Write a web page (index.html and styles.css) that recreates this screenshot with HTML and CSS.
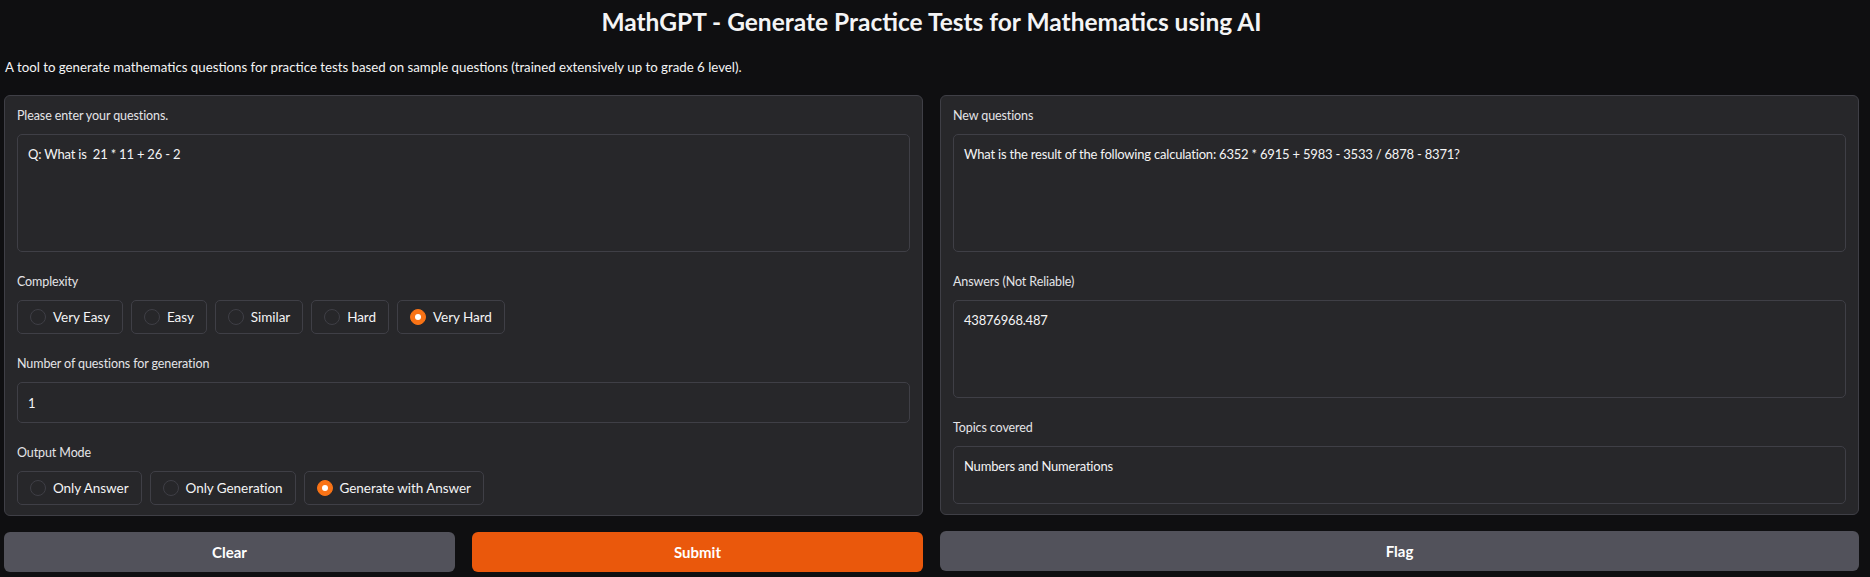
FILE: index.html
```html
<!DOCTYPE html>
<html lang="en">
<head>
<meta charset="utf-8">
<title>MathGPT</title>
<link rel="stylesheet" href="styles.css">
</head>
<body>
<div class="app">
  <h1 class="title">MathGPT - Generate Practice Tests for Mathematics using AI</h1>
  <p class="desc">A tool to generate mathematics questions for practice tests based on sample questions (trained extensively up to grade 6 level).</p>
  <div class="main">
    <div class="col">
      <div class="panel">
        <div class="field">
          <div class="label">Please enter your questions.</div>
          <textarea class="box rows5" readonly>Q: What is  21 * 11 + 26 - 2</textarea>
        </div>
        <div class="field">
          <div class="label">Complexity</div>
          <div class="radios">
            <label class="radio"><span class="dot"></span><span>Very Easy</span></label>
            <label class="radio"><span class="dot"></span><span>Easy</span></label>
            <label class="radio"><span class="dot"></span><span>Similar</span></label>
            <label class="radio"><span class="dot"></span><span>Hard</span></label>
            <label class="radio"><span class="dot on"></span><span>Very Hard</span></label>
          </div>
        </div>
        <div class="field">
          <div class="label">Number of questions for generation</div>
          <div class="box number">1</div>
        </div>
        <div class="field">
          <div class="label">Output Mode</div>
          <div class="radios">
            <label class="radio"><span class="dot"></span><span>Only Answer</span></label>
            <label class="radio"><span class="dot"></span><span>Only Generation</span></label>
            <label class="radio"><span class="dot on"></span><span>Generate with Answer</span></label>
          </div>
        </div>
      </div>
      <div class="btn-row">
        <button class="btn secondary">Clear</button>
        <button class="btn primary">Submit</button>
      </div>
    </div>
    <div class="col">
      <div class="panel">
        <div class="field">
          <div class="label">New questions</div>
          <textarea class="box rows5" readonly>What is the result of the following calculation: 6352 * 6915 + 5983 - 3533 / 6878 - 8371?</textarea>
        </div>
        <div class="field">
          <div class="label">Answers (Not Reliable)</div>
          <textarea class="box rows4" readonly>43876968.487</textarea>
        </div>
        <div class="field">
          <div class="label">Topics covered</div>
          <textarea class="box rows2" readonly>Numbers and Numerations</textarea>
        </div>
      </div>
      <div class="btn-row single">
        <button class="btn secondary">Flag</button>
      </div>
    </div>
  </div>
</div>
</body>
</html>
```
FILE: styles.css
```css
* { box-sizing: border-box; }

html, body {
  margin: 0;
  padding: 0;
  background: #0f0f11;
}

body {
  font-family: "Source Sans Pro", Lato, "Noto Sans", sans-serif;
  color: #f4f4f5;
}

.app {
  padding: 6px 11px 0 4px;
}

.title {
  margin: 0;
  text-align: center;
  font-size: 24.5px;
  line-height: 32px;
  font-weight: 700;
  color: #f4f4f5;
}

.desc {
  margin: 19px 0 18px 1px;
  font-size: 13.25px;
  line-height: 20px;
  color: #f4f4f5;
}

.main {
  display: grid;
  grid-template-columns: 1fr 1fr;
  column-gap: 17px;
  align-items: start;
}

.col {
  display: flex;
  flex-direction: column;
  gap: 16px;
}

.panel {
  background: #27272a;
  border: 1px solid #3f3f46;
  border-radius: 6px;
  padding: 10px 12px;
  display: flex;
  flex-direction: column;
  gap: 20px;
}

.field {
  display: flex;
  flex-direction: column;
  gap: 8px;
}

.label {
  font-size: 12.5px;
  line-height: 20px;
  letter-spacing: -0.1px;
  color: #e4e4e7;
}

.box {
  display: block;
  width: 100%;
  margin: 0;
  background: #27272a;
  border: 1px solid #3f3f46;
  border-radius: 5px;
  padding: 9px 10px;
  font-family: inherit;
  font-size: 13px;
  line-height: 20px;
  letter-spacing: -0.2px;
  color: #f4f4f5;
  resize: none;
  overflow: hidden;
  outline: none;
}

.rows5 { height: 118px; }
.rows4 { height: 98px; }
.rows2 { height: 58px; }

.number {
  height: 41px;
  padding: 10px 10px;
}

.radios {
  display: flex;
  gap: 8px;
}

.radio {
  display: flex;
  align-items: center;
  gap: 7px;
  height: 34px;
  padding: 0 12px;
  border: 1px solid #3f3f46;
  border-radius: 5px;
  background: #27272a;
  font-size: 13.5px;
  letter-spacing: -0.05px;
  color: #f4f4f5;
}

.dot {
  width: 16px;
  height: 16px;
  border-radius: 50%;
  border: 1px solid #3f3f46;
  background: #27272a;
  flex: none;
  position: relative;
}

.dot.on {
  background: #f97316;
  border-color: #f97316;
}

.dot.on::after {
  content: "";
  position: absolute;
  left: 50%;
  top: 50%;
  width: 6px;
  height: 6px;
  margin: -3px 0 0 -3px;
  border-radius: 50%;
  background: #ffffff;
}

.btn-row {
  display: grid;
  grid-template-columns: 1fr 1fr;
  column-gap: 17px;
}

.btn-row.single {
  grid-template-columns: 1fr;
}

.btn {
  height: 40px;
  border: none;
  border-radius: 6px;
  font-family: inherit;
  font-size: 15px;
  font-weight: 700;
  color: #ffffff;
  cursor: pointer;
}

.btn.secondary { background: #52525b; }
.btn.primary { background: #ea580c; }
```
